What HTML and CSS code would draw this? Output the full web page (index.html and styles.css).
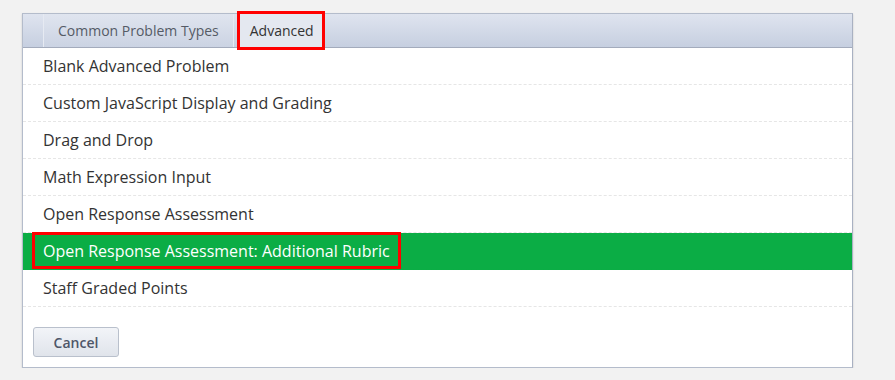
FILE: index.html
```html
<!DOCTYPE html>
<html>
<head>
    <meta charset="UTF-8">
    <title>Add Problem</title>
    <link rel="stylesheet" href="styles.css">
</head>
<body>
    <div class="painel">
        <div class="abas">
            <span class="aba">Common Problem Types</span>
            <span class="aba aba-ativa marcado">Advanced</span>
        </div>
        <ul class="lista">
            <li>Blank Advanced Problem</li>
            <li>Custom JavaScript Display and Grading</li>
            <li>Drag and Drop</li>
            <li>Math Expression Input</li>
            <li>Open Response Assessment</li>
            <li class="selecionado"><span class="marcado">Open Response Assessment: Additional Rubric</span></li>
            <li>Staff Graded Points</li>
        </ul>
        <div class="rodape">
            <button type="button" class="botao-cancelar">Cancel</button>
        </div>
    </div>
</body>
</html>
```

FILE: styles.css
```css
body {
    margin: 0;
    padding: 13px 0 0 22px;
    background-color: #f2f2f2; /*Cinza claro*/
    font-family: "Open Sans", "Liberation Sans", sans-serif;
}

.painel {
    width: 829px;
    background-color: #fff;
    border: 1px solid #b4bccb;
    border-right-color: #a9b1c2;
    box-shadow: 0 1px 2px rgba(0, 0, 0, 0.15);
}

.abas {
    display: flex;
    align-items: stretch;
    height: 33px;
    padding-left: 20px;
    background: linear-gradient(#dfe4ef, #c6cfe0);
    border-bottom: 1px solid #a3abbc;
}

.aba {
    display: flex;
    align-items: center;
    padding: 0 14px;
    font-size: 14px;
    color: #555b66;
    background: linear-gradient(#e0e5ef, #cbd3e3);
    border-left: 1px solid #e6eaf2;
    border-right: 1px solid #e6eaf2;
}

.aba-ativa {
    margin-left: 5px;
    padding: 0 8px 0 10px;
    color: #333;
    background: #e4e8f0;
}

.marcado {
    outline: 3px solid #f00; /*Vermelho*/
    outline-offset: -3px;
}

.aba.marcado {
    outline-offset: -1px;
    margin-top: -1px;
    height: 35px;
}

.lista {
    list-style: none;
    margin: 0;
    padding: 0;
}

.lista li {
    display: flex;
    align-items: center;
    height: 36px;
    padding-left: 20px;
    font-size: 16px;
    color: #333;
    border-bottom: 1px dashed #e6e6e6;
}

.lista li.selecionado {
    background-color: #0bad45; /*Verde*/
    color: #fff;
    border-bottom-color: #0bad45;
    padding-left: 9px;
}

.selecionado .marcado {
    display: flex;
    align-items: center;
    height: 37px;
    margin-top: -1px;
    padding: 0 11px;
}

.rodape {
    padding: 20px 10px 10px;
}

.botao-cancelar {
    width: 86px;
    height: 30px;
    font-family: "Open Sans", "Liberation Sans", sans-serif;
    font-size: 14px;
    font-weight: 600;
    color: #4e5668;
    background: linear-gradient(#f2f4f8, #e0e4eb);
    border: 1px solid #b9c0cc;
    border-radius: 3px;
    cursor: pointer;
}
```
